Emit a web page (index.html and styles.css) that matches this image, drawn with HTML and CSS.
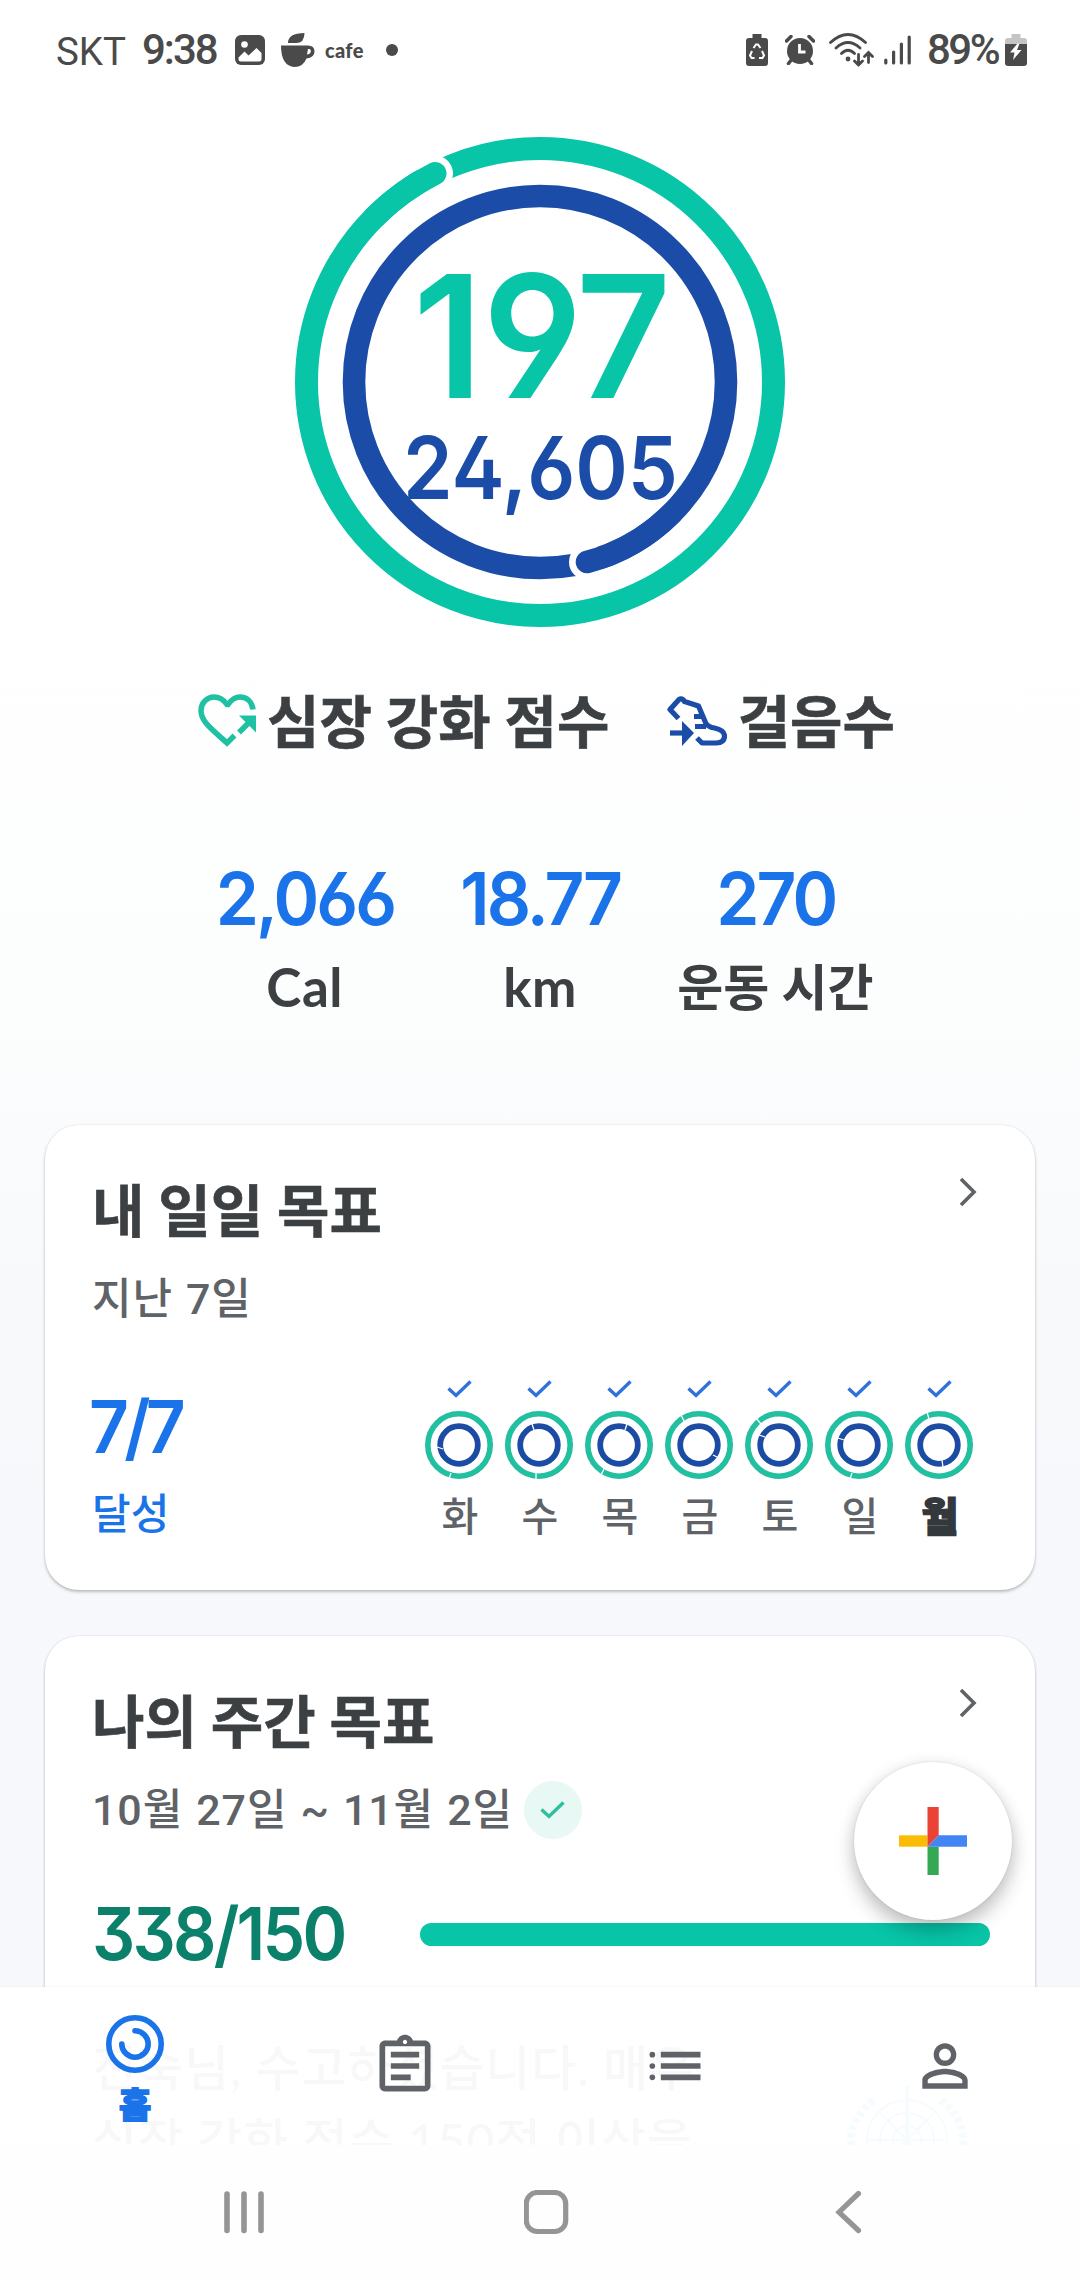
FILE: index.html
```html
<!DOCTYPE html>
<html lang="ko">
<head>
<meta charset="utf-8">
<title>피트니스</title>
<link rel="stylesheet" href="styles.css">
</head>
<body>
<svg class="defs" width="0" height="0">
  <defs>
    <symbol id="check" viewBox="0 0 25 18"><path d="M1.5 8.5 9 15.5 23.5 1.5" fill="none" stroke="currentColor" stroke-width="3.4"/></symbol>
    <symbol id="chevron" viewBox="0 0 18 30"><path d="M2 2 15 15 2 28" fill="none" stroke="#5f6368" stroke-width="3.6"/></symbol>
    <symbol id="day" viewBox="-35 -35 70 70">
      <circle r="31.2" fill="none" stroke="#22bfa0" stroke-width="5.6"/>
      <circle r="18.8" fill="none" stroke="#1b4ba3" stroke-width="5.8"/>
    </symbol>
  </defs>
</svg>
<div class="screen">
  <header class="status">
    <div class="status-side">
      <span class="carrier">SKT</span>
      <span class="clock">9:38</span>
      <svg class="ic-photo" width="30" height="30" viewBox="0 0 30 30"><rect width="30" height="30" rx="6" fill="#4a4a4a"/><circle cx="9.5" cy="9.5" r="3.3" fill="#fff"/><path d="M3.5 22.5 9.5 16.5l4 4 8-7.5 5 5V24q0 2.500-2.500 2.500H6q-2.500 0-2.500-2.500z" fill="#fff"/></svg>
      <svg class="ic-cup" width="34" height="34" viewBox="0 0 34 34"><path d="M0 12.500H27Q33.500 12.500 33.500 18.500T25.500 25.500Q22 34 13.500 34 0 33 0 12.500z" fill="#4a4a4a"/><path d="M27 16h1.500q2 1 1 3.500-1 2-3.500 2z" fill="#fff"/><path d="M7 10Q7 0 23.500 0 23.500 10 15 10z" fill="#4a4a4a"/></svg>
      <span class="cafe">cafe</span>
      <i class="dot"></i>
    </div>
    <div class="status-side">
      <svg width="22" height="32" viewBox="0 0 22 32"><path d="M6.500 0h9v4H19q3 0 3 3v22q0 3-3 3H3q-3 0-3-3V7q0-3 3-3h3.500z" fill="#4a4a4a"/><path d="M7.500 14 10 10.500h2L14.500 14M16 17l2 4.500-1.500 2.500H13M8.500 24h-3L4 21.500 6 17" fill="none" stroke="#fff" stroke-width="2"/></svg>
      <svg class="ic-alarm" width="30" height="30" viewBox="0 0 30 30"><circle cx="15" cy="16" r="13" fill="#4a4a4a"/><path d="M1.500 6 6 1.500M28.500 6 24 1.500M3.500 28.500 7 24M26.500 28.500 23 24" stroke="#4a4a4a" stroke-width="3.500" stroke-linecap="round"/><path d="M14.500 9v8h6" fill="none" stroke="#fff" stroke-width="2.800"/></svg>
      <svg class="ic-wifi" width="45" height="34" viewBox="0 0 45 34" fill="none" stroke="#4a4a4a" stroke-width="2.800" stroke-linecap="round"><path d="M1.500 9.500Q19-6.500 36.500 9.500M7 15Q19 4 31 15M12.500 20.500Q19 14 25.500 20.500"/><circle cx="19" cy="26" r="1" fill="#4a4a4a"/><path d="M29.500 21.500v10.500m-4-4 4 4 4-4M39.500 29.500V19.500m-4 4 4-4 4 4"/></svg>
      <svg class="ic-signal" width="27" height="30" viewBox="0 0 27 30" stroke="#4a4a4a" stroke-width="3.200" stroke-linecap="round"><path d="M1.800 25v3M9.600 17v11M17.400 9v19M25.200 2v26"/></svg>
      <span class="percent">89%</span>
      <svg width="22" height="32" viewBox="0 0 22 32"><path d="M6.500 0h9v4H19q3 0 3 3v3H0V7q0-3 3-3h3.500z" fill="#c4c4c4"/><path d="M0 10h22v19q0 3-3 3H3q-3 0-3-3z" fill="#4a4a4a"/><path d="M12.500 9.500 5 18.500h4.500L8 26l8.500-10H12l2.500-6.500z" fill="#fff"/></svg>
    </div>
  </header>

  <section class="hero">
    <svg class="rings" width="490" height="490" viewBox="-245 -245 490 490">
      <circle r="233.500" fill="none" stroke="#08c5a8" stroke-width="23"/>
      <circle cx="-105" cy="-208.500" r="18" fill="#fff"/>
      <path d="M-165.100 -165.100A233.500 233.500 0 0 1 -105 -208.500" fill="none" stroke="#08c5a8" stroke-width="23" stroke-linecap="round"/>
      <circle r="186" fill="none" stroke="#1b4da8" stroke-width="22.600"/>
      <circle cx="47" cy="180" r="18" fill="#fff"/>
      <path d="M131.500 131.500A186 186 0 0 1 47 180" fill="none" stroke="#1b4da8" stroke-width="22.600" stroke-linecap="round"/>
      <text class="points" x="-127" y="15.500" textLength="258" lengthAdjust="spacingAndGlyphs">197</text>
      <text class="steps" x="-137" y="117" textLength="275" lengthAdjust="spacingAndGlyphs">24,605</text>
    </svg>
    <div class="legend">
      <div class="legend-item">
        <svg class="ic-heart" width="58" height="54" viewBox="0 0 58 54" fill="none" stroke="#1fc1a2" stroke-width="5.500"><path d="M36.500 41.500 29 49C13 34.500 3 27.500 3 16.500 3 9 9 3 16 3c5 0 9.500 2.500 13 7.500h1C33.500 5.500 37 3 42 3c7 0 12 5 13 12.500"/><path d="M41 38.500 51 28.500"/><path d="M41 21.500H58V38.500z" fill="#1fc1a2" stroke="none"/></svg>
        <span>심장 강화 점수</span>
      </div>
      <div class="legend-item">
        <svg class="ic-shoe" width="60" height="50" viewBox="0 0 60 50" fill="none" stroke="#1b4da8" stroke-width="5.200" stroke-linejoin="round"><path d="M11.500 22.500 3 13.500 12 3.500q3-2 5.500 2l14 4.500 7 16.500q2 4.500 9 5.500 10 2 10 8 0 6.500-8 7H35l-5-5"/><path d="M27 20.500h9M28 30.500h11"/><path d="M3 37h13"/><path d="M15 25 27 37 15 50z" fill="#1b4da8" stroke="none"/></svg>
        <span>걸음수</span>
      </div>
    </div>
    <div class="stats">
      <div class="stat"><b class="num">2,066</b><span class="latin">Cal</span></div>
      <div class="stat"><b class="num">18.77</b><span class="latin">km</span></div>
      <div class="stat"><b class="num">270</b><span>운동 시간</span></div>
    </div>
  </section>

  <main class="feed">
    <article class="card daily">
      <div class="card-head"><h2>내 일일 목표</h2><svg class="chev" width="18" height="30"><use href="#chevron"/></svg></div>
      <p class="sub">지난 7일</p>
      <div class="daily-body">
        <div class="achieved"><b class="num">7/7</b><span>달성</span></div>
        <div class="week">
          <div class="day"><svg class="tick" width="25" height="18"><use href="#check"/></svg><svg width="70" height="70" viewBox="-35 -35 70 70"><use href="#day" x="-35" y="-35" width="70" height="70"/><path d="M-8 28l-2 6M-22 2l6 2" class="cut"/></svg><span>화</span></div>
          <div class="day"><svg class="tick" width="25" height="18"><use href="#check"/></svg><svg width="70" height="70" viewBox="-35 -35 70 70"><use href="#day" x="-35" y="-35" width="70" height="70"/><path d="M-3 28v7M-7-21l2 6" class="cut"/></svg><span>수</span></div>
          <div class="day"><svg class="tick" width="25" height="18"><use href="#check"/></svg><svg width="70" height="70" viewBox="-35 -35 70 70"><use href="#day" x="-35" y="-35" width="70" height="70"/><path d="M-15 24l-3 6M8-21l-2 6" class="cut"/></svg><span>목</span></div>
          <div class="day"><svg class="tick" width="25" height="18"><use href="#check"/></svg><svg width="70" height="70" viewBox="-35 -35 70 70"><use href="#day" x="-35" y="-35" width="70" height="70"/><path d="M-18-30l3 6M14 10l6 3" class="cut"/></svg><span>금</span></div>
          <div class="day"><svg class="tick" width="25" height="18"><use href="#check"/></svg><svg width="70" height="70" viewBox="-35 -35 70 70"><use href="#day" x="-35" y="-35" width="70" height="70"/><path d="M-23-27l5 6M-20-10l6 2" class="cut"/></svg><span>토</span></div>
          <div class="day"><svg class="tick" width="25" height="18"><use href="#check"/></svg><svg width="70" height="70" viewBox="-35 -35 70 70"><use href="#day" x="-35" y="-35" width="70" height="70"/><path d="M-7 28l-2 6M-21-7l6 2" class="cut"/></svg><span>일</span></div>
          <div class="day today"><svg class="tick" width="25" height="18"><use href="#check"/></svg><svg width="70" height="70" viewBox="-35 -35 70 70"><use href="#day" x="-35" y="-35" width="70" height="70"/><path d="M-12-33l2 7M3 15l1 7" class="cut"/></svg><span>월</span></div>
        </div>
      </div>
    </article>

    <article class="card weekly">
      <div class="card-head"><h2>나의 주간 목표</h2><svg class="chev" width="18" height="30"><use href="#chevron"/></svg></div>
      <div class="range"><p class="sub">10월 27일 ~ 11월 2일</p><span class="badge"><svg width="25" height="18"><use href="#check"/></svg></span></div>
      <div class="weekly-body"><b class="num">338/150</b><div class="bar"></div></div>
      <p class="message">진숙님, 수고하셨습니다. 매우<br>심장 강화 점수 150점 이상을</p>
      <svg class="emblem" width="120" height="70" viewBox="0 0 120 70" fill="none" stroke="#00a0d8" stroke-width="2"><circle cx="60" cy="54" r="40"/><circle cx="60" cy="54" r="27"/><circle cx="60" cy="54" r="14"/><path d="M22 54h76M33 27l54 54M87 27 33 81"/><path d="M60 0v70" stroke-width="4"/><path d="M26 14Q-4 40 6 70M94 14q30 26 20 56" stroke-width="8" stroke-dasharray="5 3"/></svg>
    </article>
  </main>

  <button class="fab" aria-label="추가"><svg width="68" height="68" viewBox="0 0 68 68"><path d="M0 28.300h28.500v11.400H0z" fill="#fbbc05"/><path d="M28.500 39.700h11.200V68H28.500z" fill="#34a853"/><path d="M28.500 0h11.200v28.300L28.500 39.700z" fill="#ea4335"/><path d="M39.700 28.300H68v11.400H28.500z" fill="#4285f4"/></svg></button>

  <nav class="tabs">
    <a class="tab active"><svg width="60" height="60" viewBox="-30 -30 60 60" fill="none" stroke="#1a73e8" stroke-width="5.600"><circle r="26.200"/><path d="M0-13.200A13.200 13.200 0 1 1-13.200 0" stroke-linecap="round"/></svg><span>홈</span></a>
    <a class="tab"><svg width="68" height="68" viewBox="0 0 24 24" fill="#5f6368"><path d="M7 15h7v2H7zm0-4h10v2H7zm0-4h10v2H7zm12-4h-4.180C14.400 1.840 13.300 1 12 1s-2.400.84-2.820 2H5c-1.100 0-2 .9-2 2v14c0 1.100.9 2 2 2h14c1.100 0 2-.9 2-2V5c0-1.100-.9-2-2-2zm-7-.25c.41 0 .75.34.75.75s-.34.75-.75.75-.75-.34-.75-.75.34-.75.75-.75zM19 19H5V5h14v14z"/></svg></a>
    <a class="tab"><svg width="68" height="68" viewBox="0 0 24 24" fill="#5f6368"><circle cx="4" cy="8" r="1"/><circle cx="4" cy="12" r="1"/><circle cx="4" cy="16" r="1"/><path d="M7 7h14v2H7zM7 11h14v2H7zM7 15h14v2H7z"/></svg></a>
    <a class="tab"><svg width="68" height="68" viewBox="0 0 24 24" fill="#5f6368"><path d="M12 5.900c1.160 0 2.100.94 2.100 2.100s-.94 2.100-2.100 2.100S9.900 9.160 9.900 8s.94-2.100 2.100-2.100m0 9c2.970 0 6.100 1.460 6.100 2.100v1.100H5.900V17c0-.64 3.130-2.100 6.100-2.100M12 4C9.790 4 8 5.790 8 8s1.790 4 4 4 4-1.790 4-4-1.790-4-4-4zm0 9c-2.670 0-8 1.340-8 4v3h16v-3c0-2.660-5.330-4-8-4z"/></svg></a>
  </nav>

  <footer class="sysnav">
    <svg width="46" height="46" viewBox="0 0 46 46" stroke="#959595" stroke-width="5.600" stroke-linecap="round"><path d="M6 4v36.500M23 4v36.500M40 4v36.500"/></svg>
    <svg width="46" height="46" viewBox="0 0 46 46"><rect x="2.300" y="2.500" width="39.400" height="39" rx="11" fill="none" stroke="#959595" stroke-width="5.200"/></svg>
    <svg width="46" height="46" viewBox="0 0 46 46"><path d="M32.500 3.500 13 22.200 32.500 40.500" fill="none" stroke="#959595" stroke-width="5.200" stroke-linecap="round"/></svg>
  </footer>
</div>
</body>
</html>
```
FILE: styles.css
```css
* { box-sizing: border-box; }
body, h2, p { margin: 0; }
svg { display: block; flex: none; }
.defs { position: absolute; }
.screen {
  position: relative;
  width: 1080px;
  height: 2280px;
  overflow: hidden;
  display: flex;
  flex-direction: column;
  background: linear-gradient(#fff 0, #fff 600px, #fcfdfd 1000px, #f8f9fb 1300px, #f7f8fb 1600px);
  font-family: Lato, "Noto Sans CJK KR", sans-serif;
  color: #3c4043;
}
.num { font-family: Inter, sans-serif; font-weight: 600; font-feature-settings: "ss01" 1; }

/* status bar */
.status {
  height: 100px;
  padding: 0 53px 0 56px;
  display: flex;
  justify-content: space-between;
  align-items: center;
  color: #4a4a4a;
  font-family: Roboto, sans-serif;
}
.status-side { display: flex; align-items: center; height: 100px; }
.carrier { width: 86px; font-size: 38.500px; font-weight: 400; padding-top: 2px; }
.clock { width: 93px; font-size: 42px; font-weight: 500; letter-spacing: -2px; line-height: 50px; }
.ic-cup { margin-left: 16px; }
.cafe { margin-left: 10px; width: 50px; font: 900 20px Lato, sans-serif; letter-spacing: .3px; }
.dot { margin-left: 11px; width: 12px; height: 12px; border-radius: 50%; background: #4a4a4a; }
.ic-alarm { margin-left: 17px; }
.ic-wifi { margin-left: 14px; }
.ic-signal { margin-left: 10px; }
.percent { width: 78px; margin-left: 16px; font-size: 42px; font-weight: 500; letter-spacing: -2.500px; line-height: 50px; }

/* rings and totals */
.hero { height: 1025px; padding-top: 37px; display: flex; flex-direction: column; align-items: center; }
.points, .steps { font-family: Inter, sans-serif; font-weight: 600; font-feature-settings: "ss01" 1; }
.points { font-size: 171px; fill: #08c5a8; }
.steps { font-size: 86px; fill: #1b4da8; }
.legend { margin-top: 52px; width: 697px; height: 84px; margin-left: 13px; display: flex; justify-content: space-between; align-items: center; font-size: 57px; font-weight: 700; line-height: 84px; white-space: nowrap; -webkit-text-stroke: .6px #3c4043; }
.legend-item { display: flex; align-items: center; gap: 11px; }
.stats { margin-top: 93px; width: 706px; display: grid; grid-template-columns: repeat(3, 1fr); }
.stat { display: flex; flex-direction: column; align-items: center; font-size: 50px; font-weight: 700; white-space: nowrap; }
.stat b { font-size: 73px; line-height: 86px; letter-spacing: -3px; transform: scaleX(.95); color: #1a73e8; }
.stat span { line-height: 90px; }
.stat .latin { font-size: 53px; letter-spacing: .5px; }

/* cards */
.feed { flex: none; padding: 0 45px; display: flex; flex-direction: column; gap: 46px; }
.card { padding: 0 44px 0 47px; border-radius: 34px; background: #fff; box-shadow: 0 2px 3px rgba(60, 64, 67, .3), 0 0 2px rgba(60, 64, 67, .15); }
.daily { height: 465px; }
.weekly { position: relative; height: 620px; }
.card-head { height: 84px; padding-top: 43px; display: flex; justify-content: space-between; }
.card-head h2 { font-size: 57px; line-height: 84px; font-weight: 700; -webkit-text-stroke: .6px #3c4043; }
.chev { margin: 9px 14px 0 0; }
.sub { font: 500 43px/64px Roboto, "Noto Sans CJK KR", sans-serif; letter-spacing: .9px; word-spacing: 1.500px; color: #5f6368; white-space: nowrap; }
.card > .sub { margin-top: 58px; }
.daily-body { margin-top: 44px; display: flex; justify-content: space-between; }
.achieved { display: flex; flex-direction: column; align-items: flex-start; padding-top: 8px; color: #1a73e8; }
.achieved b, .weekly-body b { font-size: 73px; line-height: 88px; letter-spacing: -3px; }
.achieved b { letter-spacing: -5px; transform: scaleX(.95); transform-origin: left; margin-left: -3px; }
.achieved span { font-size: 42px; font-weight: 500; line-height: 60px; margin-top: 12px; }
.week { width: 560px; margin: 5px 12px 0 0; display: grid; grid-template-columns: repeat(7, 80px); }
.day { display: flex; flex-direction: column; align-items: center; font-size: 40px; line-height: 58px; font-weight: 500; color: #5f6368; }
.tick { margin-bottom: 12px; color: #2f73da; }
.day span { margin-top: 7px; padding-left: 2px; }
.today span { color: #33383d; font-weight: 900; -webkit-text-stroke: 1.600px #33383d; }
.cut { stroke: #fff; stroke-width: 1.300; fill: none; }
.range { display: flex; align-items: center; gap: 11px; margin-top: 58px; }
.badge { width: 58px; height: 58px; border-radius: 50%; background: #e7f8f5; color: #2fbf9f; display: grid; place-items: center; }
.weekly-body { margin-top: 48px; display: flex; align-items: center; color: #0b806a; }
.weekly-body b { width: 328px; transform: scaleX(.93); transform-origin: left; }
.bar { width: 570px; height: 23px; border-radius: 12px; background: #08c5a8; }
.message { margin-top: 53px; font-size: 49px; letter-spacing: .9px; line-height: 73px; font-weight: 500; white-space: nowrap; }
.emblem { position: absolute; left: 802px; top: 450px; }

.fab { position: absolute; left: 854px; top: 1762px; width: 158px; height: 158px; padding: 0; border: 0; border-radius: 50%; background: #fff; display: grid; place-items: center; box-shadow: 0 12px 20px rgba(0, 0, 0, .2), 0 2px 16px rgba(0, 0, 0, .1), 0 0 2px rgba(0, 0, 0, .12); }

/* bars over the scrolled feed */
.tabs { position: absolute; left: 0; right: 0; top: 1987px; height: 158px; display: grid; grid-template-columns: repeat(4, 1fr); background: rgba(255, 255, 255, .965); box-shadow: 0 0 2px rgba(0, 0, 0, .07); }
.tab { display: flex; flex-direction: column; align-items: center; justify-content: center; }
.tab.active { justify-content: flex-start; padding-top: 27px; color: #1a73e8; font-size: 35px; font-weight: 900; line-height: 50px; }
.tab.active span { margin-top: 5px; -webkit-text-stroke: 1.600px #1a73e8; }
.sysnav { position: absolute; left: 0; right: 0; top: 2145px; height: 135px; padding: 0 208px 0 221px; display: flex; justify-content: space-between; align-items: center; background: #fefefe; }
```
